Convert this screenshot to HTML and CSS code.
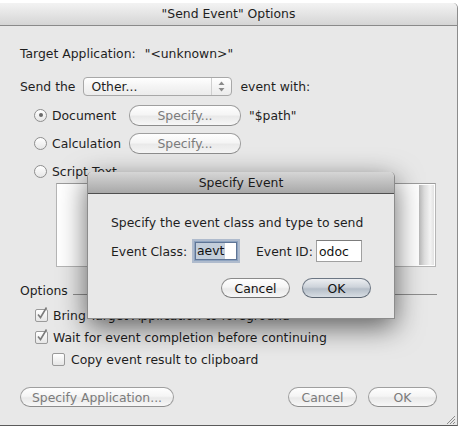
FILE: index.html
```html
<!DOCTYPE html>
<html lang="en">
<head>
    <meta charset="UTF-8">
    <title>"Send Event" Options</title>
    <link rel="stylesheet" href="styles.css">
</head>
<body>
    <div class="window">
        <div class="titlebar">"Send Event" Options</div>
        <div class="content">
            <div class="row row-target">
                <span>Target Application:</span>
                <span class="app-name">"&lt;unknown&gt;"</span>
            </div>
            <div class="row row-send">
                <span>Send the</span>
                <div class="popup">
                    <span class="popup-text">Other...</span>
                    <span class="popup-arrows">
                        <svg width="7" height="11" viewBox="0 0 7 11"><polygon points="0.5,4 3.5,0.5 6.5,4" fill="#8a8a8a"/><polygon points="0.5,7 3.5,10.5 6.5,7" fill="#8a8a8a"/></svg>
                    </span>
                </div>
                <span class="after-popup">event with:</span>
            </div>
            <div class="row row-radio row-doc">
                <span class="radio on"></span>
                <span class="radio-label">Document</span>
                <span class="btn btn-specify">Specify...</span>
                <span class="path">"$path"</span>
            </div>
            <div class="row row-radio">
                <span class="radio"></span>
                <span class="radio-label">Calculation</span>
                <span class="btn btn-specify">Specify...</span>
            </div>
            <div class="row row-radio">
                <span class="radio"></span>
                <span class="radio-label">Script Text</span>
            </div>
            <div class="script-box">
                <div class="scroll-track"></div>
            </div>
            <div class="row row-options">
                <span>Options</span>
                <span class="rule"></span>
            </div>
            <div class="row row-check row-check-first">
                <span class="check"><svg width="14" height="15" viewBox="0 0 14 15"><path d="M3 8.5 L5.5 11.5 L11.5 1.5" fill="none" stroke="#7c7c7c" stroke-width="1.6"/></svg></span>
                <span>Bring Target Application to foreground</span>
            </div>
            <div class="row row-check">
                <span class="check"><svg width="14" height="15" viewBox="0 0 14 15"><path d="M3 8.5 L5.5 11.5 L11.5 1.5" fill="none" stroke="#7c7c7c" stroke-width="1.6"/></svg></span>
                <span>Wait for event completion before continuing</span>
            </div>
            <div class="row row-check row-check-sub">
                <span class="check"></span>
                <span>Copy event result to clipboard</span>
            </div>
            <div class="row row-buttons">
                <span class="btn btn-app">Specify Application...</span>
                <span class="spacer"></span>
                <span class="btn btn-small">Cancel</span>
                <span class="btn btn-small">OK</span>
            </div>
        </div>
        <span class="grip">
            <svg width="11" height="11" viewBox="0 0 11 11"><path d="M10 2 L2 10 M10 5 L5 10 M10 8 L8 10" stroke="#8c8c8c" stroke-width="1"/></svg>
        </span>

        <div class="sheet">
            <div class="sheet-title">Specify Event</div>
            <div class="sheet-body">
                <div class="row row-prompt">Specify the event class and type to send</div>
                <div class="row row-fields">
                    <span class="field-label label-class">Event Class:</span>
                    <span class="field field-focus"><span class="selected">aevt</span></span>
                    <span class="field-label label-id">Event ID:</span>
                    <span class="field">odoc</span>
                </div>
                <div class="row row-sheet-buttons">
                    <span class="btn btn-sheet">Cancel</span>
                    <span class="btn btn-sheet btn-default">OK</span>
                </div>
            </div>
        </div>
    </div>
</body>
</html>
```

FILE: styles.css
```css
body {
    margin: 0;
    background: #fff;
    font-family: "DejaVu Sans", sans-serif;
    font-size: 12.4px;
    color: #1e1e1e;
}
.window {
    position: relative;
    margin-top: 3px;
    width: 457px;
    height: 422px;
    background: #e8e8e8;
    border-right: 1px solid #8c8c8c;
    border-bottom: 1px solid #5a5a5a;
    border-top-right-radius: 5px;
}
.titlebar {
    height: 22px;
    line-height: 22px;
    text-align: center;
    border-bottom: 1px solid #8a8a8a;
    border-top-right-radius: 5px;
    background: linear-gradient(#f3f3f3, #d5d5d5);
}
.content {
    display: flex;
    flex-direction: column;
    padding: 0 20px;
}
.row {
    display: flex;
    align-items: center;
    height: 20px;
    white-space: nowrap;
}
.row-target {
    margin-top: 17px;
}
.app-name {
    margin-left: 9px;
}
.row-send {
    margin-top: 13px;
}
.popup {
    display: flex;
    align-items: center;
    box-sizing: border-box;
    width: 149px;
    height: 19px;
    margin-left: 8px;
    border: 1px solid #a8a8a8;
    border-radius: 4px;
    background: linear-gradient(#ffffff, #f4f4f4 50%, #ececec);
}
.popup-text {
    flex: 1;
    padding-left: 7px;
}
.popup-arrows {
    display: flex;
    align-items: center;
    justify-content: center;
    width: 19px;
    height: 100%;
    border-left: 1px solid #cfcfcf;
}
.after-popup {
    margin-left: 8px;
}
.row-radio {
    margin-top: 8px;
}
.row-doc.row-radio {
    margin-top: 9px;
}
.radio {
    display: flex;
    align-items: center;
    justify-content: center;
    box-sizing: border-box;
    width: 13px;
    height: 13px;
    margin-left: 14px;
    border: 1px solid #8e8e8e;
    border-radius: 50%;
    background: linear-gradient(#ffffff, #e6e6e6);
}
.radio.on::after {
    content: "";
    width: 4px;
    height: 4px;
    border-radius: 50%;
    background: #6a6a6a;
}
.radio-label {
    width: 77px;
    margin-left: 5px;
}
.btn {
    display: flex;
    align-items: center;
    justify-content: center;
    box-sizing: border-box;
    height: 20px;
    border: 1px solid #9f9f9f;
    border-bottom-color: #8d8d8d;
    border-radius: 10px;
    background: linear-gradient(#fefefe, #f5f5f5 45%, #e9e9e9 55%, #f7f7f7);
    color: #7b7b7b;
}
.btn-specify {
    width: 112px;
    height: 21px;
}
.path {
    margin-left: 8px;
}
.script-box {
    display: flex;
    justify-content: flex-end;
    box-sizing: border-box;
    width: 380px;
    height: 84px;
    margin: 2px 0 0 36px;
    padding: 1px;
    border: 1px solid #b5b5b5;
    border-top-color: #9c9c9c;
    background: #fff;
}
.scroll-track {
    width: 15px;
    background: linear-gradient(to right, #b9b9b9, #dcdcdc 35%, #f3f3f3 75%, #e2e2e2);
}
.row-options {
    margin-top: 13px;
}
.rule {
    flex: 1;
    margin: 8px 0 0 5px;
    border-top: 1px solid #8e8e8e;
}
.row-check {
    margin-top: 2px;
}
.row-check-first {
    margin-top: 5px;
}
.check {
    position: relative;
    box-sizing: border-box;
    width: 13px;
    height: 13px;
    margin: 0 5px 0 15px;
    border: 1px solid #9a9a9a;
    border-radius: 2px;
    background: linear-gradient(#ffffff, #e6e6e6);
}
.check svg {
    position: absolute;
    left: -1px;
    top: -4px;
}
.row-check-sub .check {
    margin: 0 6px 0 32px;
}
.row-buttons {
    margin-top: 18px;
    gap: 11px;
}
.btn-app {
    width: 154px;
}
.spacer {
    flex: 1;
}
.btn-small {
    width: 69px;
}
.grip {
    position: absolute;
    right: 1px;
    bottom: 1px;
    width: 11px;
    height: 11px;
}
.sheet {
    position: absolute;
    left: 87px;
    top: 169px;
    box-sizing: border-box;
    width: 308px;
    height: 147px;
    border: 1px solid #8c8c8c;
    border-top: none;
    border-radius: 5px 5px 0 0;
    background: #e8e8e8;
    box-shadow: 0 8px 28px rgba(0, 0, 0, 0.6);
}
.sheet-title {
    height: 21px;
    line-height: 21px;
    text-align: center;
    border-bottom: 1px solid #4f4f4f;
    border-radius: 5px 5px 0 0;
    background: linear-gradient(#d6d6d6, #a8a8a8);
    color: #1a1a1a;
}
.sheet-body {
    display: flex;
    flex-direction: column;
    padding: 0 23px;
}
.row-prompt {
    margin-top: 18px;
}
.row-fields {
    margin-top: 9px;
}
.label-class {
    width: 84px;
}
.label-id {
    width: 60px;
    margin-left: 19px;
}
.field {
    display: flex;
    align-items: center;
    box-sizing: border-box;
    width: 46px;
    height: 22px;
    padding-left: 2px;
    border: 1px solid #a0a0a0;
    border-top-color: #7c7c7c;
    background: #fff;
    color: #111;
}
.field-focus {
    width: 42px;
    height: 18px;
    padding-left: 0;
    border: 1px solid #5f7596;
    box-shadow: 0 0 0 1px #8ea3bf, 0 0 0 3px rgba(128, 150, 182, 0.55);
}
.selected {
    height: 100%;
    line-height: 16px;
    padding: 0 1px;
    background: #c3cedb;
}
.row-sheet-buttons {
    justify-content: flex-end;
    gap: 12px;
    margin-top: 17px;
}
.btn-sheet {
    width: 69px;
    color: #111;
    border-color: #8a8a8a;
    border-bottom-color: #727272;
}
.btn-default {
    border-color: #6c7683;
    border-bottom-color: #5a6470;
    background: linear-gradient(#eceef1, #cdd3da 45%, #b5bec8 55%, #d7dde3);
}
```
